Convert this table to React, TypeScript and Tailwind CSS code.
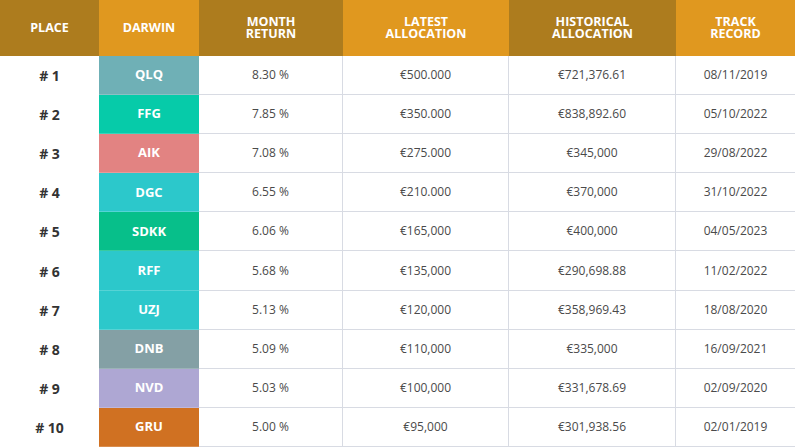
import React from "react";

interface Row {
  place: string;
  darwin: string;
  color: string;
  monthReturn: string;
  latest: string;
  historical: string;
  track: string;
}

const rows: Row[] = [
  { place: "# 1", darwin: "QLQ", color: "bg-[#6fb0b6]", monthReturn: "8.30 %", latest: "€500.000", historical: "€721,376.61", track: "08/11/2019" },
  { place: "# 2", darwin: "FFG", color: "bg-[#06cba9]", monthReturn: "7.85 %", latest: "€350.000", historical: "€838,892.60", track: "05/10/2022" },
  { place: "# 3", darwin: "AIK", color: "bg-[#e28382]", monthReturn: "7.08 %", latest: "€275.000", historical: "€345,000", track: "29/08/2022" },
  { place: "# 4", darwin: "DGC", color: "bg-[#2cc8cb]", monthReturn: "6.55 %", latest: "€210.000", historical: "€370,000", track: "31/10/2022" },
  { place: "# 5", darwin: "SDKK", color: "bg-[#07bf8a]", monthReturn: "6.06 %", latest: "€165,000", historical: "€400,000", track: "04/05/2023" },
  { place: "# 6", darwin: "RFF", color: "bg-[#2cc8cb]", monthReturn: "5.68 %", latest: "€135,000", historical: "€290,698.88", track: "11/02/2022" },
  { place: "# 7", darwin: "UZJ", color: "bg-[#2cc8cb]", monthReturn: "5.13 %", latest: "€120,000", historical: "€358,969.43", track: "18/08/2020" },
  { place: "# 8", darwin: "DNB", color: "bg-[#84a0a5]", monthReturn: "5.09 %", latest: "€110,000", historical: "€335,000", track: "16/09/2021" },
  { place: "# 9", darwin: "NVD", color: "bg-[#aea7d3]", monthReturn: "5.03 %", latest: "€100,000", historical: "€331,678.69", track: "02/09/2020" },
  { place: "# 10", darwin: "GRU", color: "bg-[#d07122]", monthReturn: "5.00 %", latest: "€95,000", historical: "€301,938.56", track: "02/01/2019" },
];

const dark = "bg-[#ad7c1e]";
const light = "bg-[#e0981f]";

const headers = [
  { label: ["PLACE"], w: "w-[99px]", bg: dark },
  { label: ["DARWIN"], w: "w-[100px]", bg: light },
  { label: ["MONTH", "RETURN"], w: "w-[144px]", bg: dark },
  { label: ["LATEST", "ALLOCATION"], w: "w-[166px]", bg: light },
  { label: ["HISTORICAL", "ALLOCATION"], w: "w-[167px]", bg: dark },
  { label: ["TRACK", "RECORD"], w: "flex-1", bg: light },
];

const cell = "flex items-center justify-center border-b border-[#d8dbe3] text-[12px] text-[#4a4a4a]";

export default function App() {
  return (
    <div className="w-[795px] h-[447px] flex flex-col bg-white font-['Open_Sans',sans-serif] overflow-hidden">
      <div className="h-[56px] flex shrink-0">
        {headers.map((h) => (
          <div
            key={h.label.join(" ")}
            className={`${h.w} ${h.bg} flex flex-col items-center justify-center text-white font-bold text-[12.5px] leading-[12.5px]`}
          >
            {h.label.map((l) => (
              <span key={l}>{l}</span>
            ))}
          </div>
        ))}
      </div>
      {rows.map((r) => (
        <div key={r.place} className="flex-1 flex">
          <div className="w-[99px] flex items-center justify-center font-bold text-[14px] text-[#333]">
            {r.place}
          </div>
          <div
            className={`w-[100px] ${r.color} flex items-center justify-center text-white font-bold text-[13px] border-b border-white/20`}
          >
            {r.darwin}
          </div>
          <div className={`w-[144px] border-r ${cell}`}>{r.monthReturn}</div>
          <div className={`w-[166px] border-r ${cell}`}>{r.latest}</div>
          <div className={`w-[167px] border-r ${cell}`}>{r.historical}</div>
          <div className={`flex-1 ${cell}`}>{r.track}</div>
        </div>
      ))}
    </div>
  );
}
